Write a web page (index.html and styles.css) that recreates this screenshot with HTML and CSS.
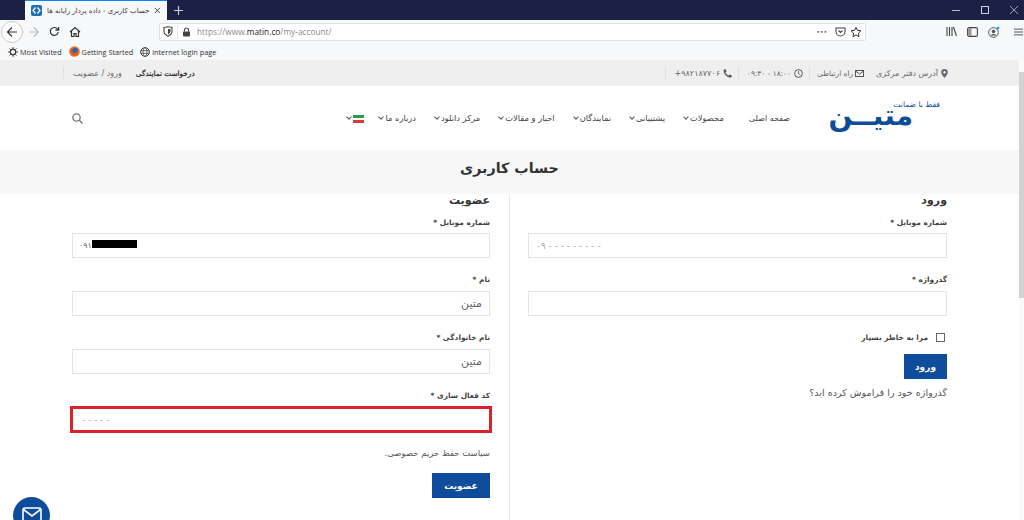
FILE: index.html
```html
<!DOCTYPE html>
<html lang="fa">
<head>
  <meta charset="UTF-8">
  <title>حساب کاربری</title>
  <link rel="stylesheet" href="styles.css">
</head>
<body>
  <div class="tabbar">
    <div class="tab">
      <svg class="favicon" width="11" height="11" viewBox="0 0 11 11"><rect width="11" height="11" rx="2" fill="#1f6fb5"/><path d="M4.500 2.500 2 5.500l2.500 3M6.500 2.500l2.500 3-2.500 3" fill="none" stroke="#fff" stroke-width="1.300"/></svg>
      <span class="tab-title" dir="rtl">حساب کاربری - داده پرداز رایانه ها</span>
      <svg width="9" height="9" viewBox="0 0 9 9"><path d="M1 1l7 7M8 1 1 8" stroke="#333" stroke-width="1.200"/></svg>
    </div>
    <svg class="newtab" width="11" height="11" viewBox="0 0 11 11"><path d="M5.500 1v9M1 5.500h9" stroke="#c9cad6" stroke-width="1.200"/></svg>
    <div class="winctl">
      <svg width="10" height="10" viewBox="0 0 10 10"><path d="M1 5.500h8" stroke="#b9bbca"/></svg>
      <svg width="10" height="10" viewBox="0 0 10 10"><rect x="1.500" y="1.500" width="7" height="7" fill="none" stroke="#d0d1dc"/></svg>
      <svg width="10" height="10" viewBox="0 0 10 10"><path d="M1 1l8 8M9 1 1 9" stroke="#9b9db0"/></svg>
    </div>
  </div>

  <div class="toolbar">
    <div class="backbtn">
      <svg width="12" height="12" viewBox="0 0 12 12"><path d="M11 6H1.500M6 1.500 1.500 6 6 10.500" fill="none" stroke="#333" stroke-width="1.200"/></svg>
    </div>
    <svg class="tool" width="12" height="12" viewBox="0 0 12 12"><path d="M1 6h9.500M6 1.500 10.500 6 6 10.500" fill="none" stroke="#bbb" stroke-width="1.200"/></svg>
    <svg class="tool" width="11" height="11" viewBox="0 0 12 12"><path d="M10 6.500A4.300 4.300 0 1 1 8.700 2.800L10.500 4.500M10.500 1v3.500H7" fill="none" stroke="#333" stroke-width="1.300"/></svg>
    <svg class="tool" width="12" height="12" viewBox="0 0 12 12"><path d="M1 6 6 1.500 11 6M2.500 5v5.500h2.500V7.500h2v3h2.500V5" fill="none" stroke="#333" stroke-width="1.200"/></svg>
    <div class="urlbar">
      <svg width="10" height="11" viewBox="0 0 10 11"><path d="M1 1.500 5 .8l4 .7v4c0 2.200-2 3.700-4 4.700-2-1-4-2.500-4-4.700z" fill="none" stroke="#444" stroke-width="1.100"/><path d="M5 3v5.500c1.500-.8 2.500-1.800 2.500-3.200V3z" fill="#444"/></svg>
      <span class="urlsep"></span>
      <svg width="9" height="10" viewBox="0 0 9 10"><path d="M2.500 4.500V3a2 2 0 0 1 4 0v1.500" fill="none" stroke="#444" stroke-width="1.200"/><rect x="1" y="4.500" width="7" height="5" rx=".8" fill="#444"/></svg>
      <span class="url">https://www.<b>matin.co</b>/my-account/</span>
      <span class="dots">•••</span>
      <svg width="11" height="10" viewBox="0 0 11 10"><path d="M1 1h9v3.500a4.500 4.500 0 0 1-9 0z" fill="none" stroke="#444" stroke-width="1.100"/><path d="M3.500 3.500 5.500 5.500 7.500 3.500" fill="none" stroke="#444" stroke-width="1.100"/></svg>
      <svg width="12" height="12" viewBox="0 0 24 24"><path d="M12 2.500l3 6.300 6.800.9-5 4.700 1.300 6.800-6.100-3.300-6.100 3.300 1.300-6.800-5-4.700 6.800-.9z" fill="none" stroke="#333" stroke-width="2"/></svg>
    </div>
    <div class="toolright">
      <svg width="11" height="11" viewBox="0 0 11 11"><path d="M1 1v9M3.500 1v9M6 1v9M7.500 1l3 9" stroke="#444" stroke-width="1.100" fill="none"/></svg>
      <svg width="11" height="10" viewBox="0 0 11 10"><rect x=".6" y=".6" width="9.800" height="8.800" rx="1.500" fill="none" stroke="#444" stroke-width="1.100"/><path d="M1 1h3.500v8H1z" fill="#999"/></svg>
      <svg width="12" height="12" viewBox="0 0 12 12"><circle cx="5.500" cy="6.500" r="4.800" fill="none" stroke="#555"/><circle cx="5.500" cy="5.500" r="1.800" fill="#555"/><path d="M2.500 9.500c1-2 5-2 6 0" fill="#555"/><circle cx="10" cy="2" r="1.500" fill="#30a9d8"/></svg>
      <svg class="hamburger" width="9" height="8" viewBox="0 0 11 9"><path d="M0 1h11M0 4.500h11M0 8h11" stroke="#444" stroke-width="1.100"/></svg>
    </div>
  </div>

  <div class="bookmarks">
    <span class="bookmark">
      <svg width="10" height="10" viewBox="0 0 11 11"><circle cx="5.500" cy="5.500" r="3" fill="none" stroke="#444" stroke-width="1.500"/><path d="M5.500 0v2M5.500 9v2M0 5.500h2M9 5.500h2M1.600 1.600 3 3M8 8l1.400 1.400M1.600 9.400 3 8M8 3l1.400-1.400" stroke="#444"/></svg>
      Most Visited
    </span>
    <span class="bookmark">
      <svg width="11" height="11" viewBox="0 0 11 11"><circle cx="5.500" cy="5.500" r="5.300" fill="#e8772e"/><circle cx="6" cy="4.500" r="2.800" fill="#3a5fa8"/><path d="M2 2c-1.500 3 0 7 3.500 7.500 2.500 0 4.500-1.500 5-4-1 2-3 3-5 2.300C3.500 7 2.500 4.500 2 2z" fill="#d9541e"/></svg>
      Getting Started
    </span>
    <span class="bookmark">
      <svg width="10" height="10" viewBox="0 0 11 11"><circle cx="5.500" cy="5.500" r="4.800" fill="none" stroke="#444" stroke-width="1.100"/><ellipse cx="5.500" cy="5.500" rx="2.200" ry="4.800" fill="none" stroke="#444" stroke-width=".8"/><path d="M.7 4h9.600M.7 7h9.600" stroke="#444" stroke-width=".8"/></svg>
      internet login page
    </span>
  </div>

  <div class="viewport">
    <div class="site" dir="rtl">
      <div class="topbar">
        <div class="topbar-info">
          <span class="info">
            <svg width="7" height="9" viewBox="0 0 7 9"><path d="M3.500 0A3.300 3.300 0 0 0 .2 3.300C.2 5.500 3.500 9 3.500 9s3.300-3.500 3.300-5.700A3.300 3.300 0 0 0 3.500 0z" fill="#667"/><circle cx="3.500" cy="3.300" r="1.200" fill="#efefef"/></svg>
            آدرس دفتر مرکزی
          </span>
          <span class="info info-sep info-mail">
            <svg width="9" height="7" viewBox="0 0 9 7"><rect x=".5" y=".5" width="8" height="6" fill="none" stroke="#555"/><path d="M.5 1 4.500 4l4-3" fill="none" stroke="#555"/></svg>
            راه ارتباطی
          </span>
          <span class="info info-sep">
            <svg width="9" height="9" viewBox="0 0 9 9"><circle cx="4.500" cy="4.500" r="3.900" fill="none" stroke="#555"/><path d="M4.500 2v2.700l1.800 1" fill="none" stroke="#555" stroke-width=".8"/></svg>
            <span dir="ltr">۰۹:۳۰ - ۱۸:۰۰</span>
          </span>
          <span class="info info-sep info-phone">
            <svg width="9" height="9" viewBox="0 0 9 9"><path d="M8.800 6.500 6.700 5.400 5.600 6.600C4.300 6 3 4.700 2.400 3.400L3.600 2.300 2.500.2.500.7C.4 5 4 8.600 8.300 8.500z" fill="#555"/></svg>
            <span dir="ltr">+۹۸۲۱۸۷۷۰۶</span>
          </span>
        </div>
        <div class="topbar-links">
          <span class="rep">درخواست نمایندگی</span>
          <span class="login">ورود / عضویت</span>
        </div>
      </div>

      <header class="header">
        <div class="logo">
          <span class="logo-tag">فقط با ضمانت</span>
          <span class="logo-name">متیــن</span>
        </div>
        <nav class="nav">
          <a class="home">صفحه اصلی</a>
          <a class="sub">محصولات</a>
          <a class="sub">پشتیبانی</a>
          <a class="sub">نمایندگان</a>
          <a class="sub">اخبار و مقالات</a>
          <a class="sub">مرکز دانلود</a>
          <a class="sub">درباره ما</a>
          <a class="sub flag-item"><span class="flag"></span></a>
        </nav>
        <svg class="search" width="11" height="11" viewBox="0 0 11 11"><circle cx="4.500" cy="4.500" r="3.700" fill="none" stroke="#777" stroke-width="1.300"/><path d="M7.300 7.300 10.500 10.500" stroke="#777" stroke-width="1.400"/></svg>
      </header>

      <div class="page-title">حساب کاربری</div>

      <main class="columns">
        <section class="col col-login">
          <h2>ورود</h2>
          <label>شماره موبایل *</label>
          <input class="input ltr" placeholder="۰۹ - - - - - - - - -">
          <label>گذرواژه *</label>
          <input class="input" type="password">
          <div class="remember">
            <span class="check"></span>
            <span>مرا به خاطر بسپار</span>
          </div>
          <button class="btn btn-login">ورود</button>
          <a class="forgot">گذرواژه خود را فراموش کرده اید؟</a>
        </section>
        <section class="col col-register">
          <h2>عضویت</h2>
          <label>شماره موبایل *</label>
          <div class="input ltr phone">۰۹۱<span class="redact"></span></div>
          <label>نام *</label>
          <input class="input" value="متین">
          <label>نام خانوادگی *</label>
          <input class="input" value="متین">
          <label>کد فعال سازی *</label>
          <input class="input ltr input-code" placeholder="- - - - -">
          <p class="privacy">سیاست حفظ حریم خصوصی.</p>
          <button class="btn btn-register">عضویت</button>
        </section>
      </main>
    </div>
    <div class="scrollbar"><div class="thumb"></div></div>
    <div class="mail-fab">
      <svg width="20" height="16" viewBox="0 0 20 16"><rect x="1" y="1" width="18" height="14" rx="2" fill="none" stroke="#fff" stroke-width="1.600"/><path d="M1.500 2.500 10 9l8.500-6.500" fill="none" stroke="#fff" stroke-width="1.600"/></svg>
    </div>
  </div>
</body>
</html>
```

FILE: styles.css
```css
* {
  box-sizing: border-box;
  margin: 0;
  padding: 0;
}

html, body {
  height: 520px;
  overflow: hidden;
}

body {
  font-family: "DejaVu Sans", sans-serif;
  background-color: #fff;
  color: #333;
}

/* browser chrome */
.tabbar {
  display: flex;
  align-items: center;
  height: 20px;
  padding-left: 25px;
  background-color: #1d2045;
}

.tab {
  display: flex;
  align-items: center;
  gap: 5px;
  width: 142px;
  height: 20px;
  padding: 0 6px;
  background-color: #f7f8f9;
  border-top: 1px solid #0a84ff;
}

.favicon {
  flex: none;
}

.tab-title {
  flex: 1;
  white-space: nowrap;
  font-size: 7px;
  color: #333;
}

.newtab {
  margin-left: 6px;
}

.winctl {
  display: flex;
  align-items: center;
  gap: 19px;
  margin-left: auto;
  padding-right: 5px;
}

.toolbar {
  display: flex;
  align-items: center;
  height: 23px;
  padding-left: 1px;
  background-color: #f7f8f9;
}

.backbtn {
  display: flex;
  align-items: center;
  justify-content: center;
  width: 22px;
  height: 22px;
  background-color: #fff;
  border: 1px solid #c8c8c8;
  border-radius: 50%;
}

.tool {
  margin-left: 5px;
}

.tool + .tool {
  margin-left: 9px;
}

.urlbar {
  display: flex;
  align-items: center;
  gap: 4px;
  width: 707px;
  height: 18px;
  margin-left: 78px;
  padding: 0 3px;
  background-color: #fff;
  border: 1px solid #e2e2e4;
  border-radius: 2px;
}

.urlsep {
  width: 1px;
  height: 14px;
  background-color: #e5e5e5;
}

.url {
  flex: 1;
  margin-left: 2px;
  font-family: "Open Sans", sans-serif;
  font-size: 8.300px;
  color: #8a8a8a;
}

.url b {
  font-weight: 400;
  color: #222;
}

.dots {
  margin-right: 4px;
  font-size: 6px;
  color: #555;
}

.toolright {
  display: flex;
  align-items: center;
  gap: 10px;
  margin-left: 80px;
}

.hamburger {
  margin-left: 4px;
}

.bookmarks {
  display: flex;
  align-items: center;
  gap: 7px;
  height: 17px;
  padding-left: 8px;
  background-color: #f7f8f9;
}

.bookmark {
  display: flex;
  align-items: center;
  gap: 2px;
  font-family: "Open Sans", sans-serif;
  font-size: 7.300px;
  color: #333;
  white-space: nowrap;
}

/* page */
.viewport {
  display: flex;
  height: 460px;
}

.site {
  flex: 1;
  min-width: 0;
}

.scrollbar {
  width: 5px;
  height: 460px;
  padding-top: 12px;
  background-color: #fafafa;
}

.thumb {
  height: 226px;
  background-color: #d2d2d2;
}

.topbar {
  display: flex;
  align-items: center;
  justify-content: space-between;
  height: 26px;
  padding: 0 71px 0 63px;
  background-color: #efefef;
  font-size: 8px;
  color: #666;
}

.topbar-info, .topbar-links {
  display: flex;
  align-items: center;
}

.info {
  display: flex;
  align-items: center;
  gap: 3px;
  margin-left: 12px;
  white-space: nowrap;
}

.info-sep {
  height: 12px;
  margin-left: 6px;
  padding-left: 8px;
  border-left: 1px solid #e0e0e0;
  font-size: 7.400px;
}

.info-mail {
  gap: 2px;
  padding-left: 7px;
}

.info-phone {
  margin-left: 0;
  padding-left: 9px;
  font-size: 8px;
}

.topbar-links {
  height: 12px;
  padding-left: 9px;
  border-left: 1px solid #e0e0e0;
}

.rep {
  margin-left: 14px;
  font-size: 7.300px;
  color: #222;
  -webkit-text-stroke: 0.2px #222;
}

.login {
  color: #666;
}

.header {
  display: flex;
  align-items: center;
  height: 64px;
  padding: 0 79px 0 72px;
}

.logo {
  display: flex;
  flex-direction: column;
  flex: none;
  width: 112px;
  margin-bottom: 10px;
  color: #0f4c96;
}

.logo-tag {
  font-size: 7.600px;
  line-height: 8px;
}

.logo-name {
  margin: -3px 27px 0 0;
  font-size: 28px;
  font-weight: 700;
  line-height: 20px;
  white-space: nowrap;
}

.nav {
  display: flex;
  align-items: center;
  flex: 1;
  gap: 19px;
  margin-right: 38px;
  font-size: 8.300px;
  color: #444;
  white-space: nowrap;
}

.home {
  margin-left: 6px;
  font-size: 8px;
}

.sub::after {
  content: "";
  display: inline-block;
  width: 3px;
  height: 3px;
  margin: 0 2px 2px 0;
  border-right: 1px solid #555;
  border-bottom: 1px solid #555;
  transform: rotate(45deg);
}

.flag-item {
  margin-right: -4px;
}

.flag {
  display: inline-block;
  width: 11px;
  height: 8px;
  vertical-align: middle;
  background: linear-gradient(#2a9d4a 33%, #fff 33%, #fff 66%, #d83a3a 66%);
}

.search {
  flex: none;
}

.page-title {
  height: 44px;
  background-color: #f7f7f7;
  font-size: 14.300px;
  font-weight: 700;
  line-height: 36px;
  text-align: center;
  color: #333;
}

.columns {
  display: grid;
  grid-template-columns: 438px 437px;
  padding: 0 72px;
}

.col {
  display: flex;
  flex-direction: column;
  align-items: flex-start;
  height: 330px;
}

.col-login {
  padding-left: 18px;
  border-left: 1px solid #e6e6e6;
}

.col-register {
  padding-right: 19px;
}

.col h2 {
  height: 14px;
  font-size: 11px;
  font-weight: 700;
  line-height: 14px;
  color: #333;
}

.col label {
  height: 11px;
  margin: 9px 0 5px;
  font-size: 7.400px;
  font-weight: 700;
  line-height: 11px;
  color: #444;
}

.col .input + label {
  margin: 16px 0 6px;
}

.input {
  display: block;
  width: 100%;
  height: 25px;
  padding: 0 7px;
  border: 1px solid #e4e4e4;
  background-color: #fff;
  font-family: "DejaVu Sans", sans-serif;
  font-size: 11px;
  color: #666;
  outline: none;
}

.input::placeholder {
  color: #aaa;
}

.ltr {
  direction: ltr;
  font-size: 9px;
}

.phone {
  display: flex;
  align-items: center;
  padding-left: 6px;
  font-size: 8px;
}

.redact {
  width: 45px;
  height: 8px;
  margin-top: -3px;
  background-color: #000;
}

.input-code {
  width: calc(100% + 4px);
  height: 27px;
  margin: -1px -2px 0 0;
  padding-left: 9px;
  border: 3px solid #d9222e;
}

.remember {
  display: flex;
  align-items: center;
  gap: 8px;
  margin: 17px 2px 0 0;
  font-size: 7.400px;
  font-weight: 700;
  color: #444;
}

.check {
  width: 9px;
  height: 9px;
  background-color: #fff;
  border: 1px solid #666;
}

.btn {
  display: block;
  height: 25px;
  background-color: #0f4c9c;
  border: none;
  font-family: "DejaVu Sans", sans-serif;
  font-size: 9px;
  font-weight: 700;
  color: #fff;
}

.btn-login {
  width: 43px;
  margin-top: 12px;
}

.btn-register {
  width: 58px;
  margin-top: 14px;
}

.forgot {
  margin-top: 8px;
  font-size: 9.600px;
  color: #555;
}

.privacy {
  margin-top: 15px;
  font-size: 8.500px;
  line-height: 11px;
  color: #555;
}

.mail-fab {
  position: absolute;
  left: 13px;
  top: 497px;
  display: flex;
  justify-content: center;
  width: 37px;
  height: 37px;
  padding-top: 10px;
  background-color: #0f4c9c;
  border-radius: 50%;
}
```
